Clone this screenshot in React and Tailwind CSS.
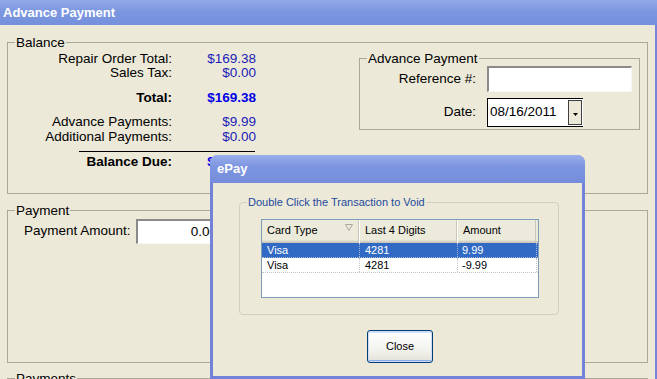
import React from 'react';

const balanceRows = [
  { label: 'Repair Order Total:', value: '$169.38', gap: 'mt-[2px]' },
  { label: 'Sales Tax:', value: '$0.00', gap: '' },
  { label: 'Total:', value: '$169.38', gap: 'mt-[11px]', bold: true },
  { label: 'Advance Payments:', value: '$9.99', gap: 'mt-[10px]' },
  { label: 'Additional Payments:', value: '$0.00', gap: 'mt-[1px]' },
];

const transactions = [
  { card: 'Visa', digits: '4281', amount: '9.99', selected: true },
  { card: 'Visa', digits: '4281', amount: '-9.99' },
];

const sunken =
  'bg-white border-t-2 border-l-2 border-r border-b border-t-[#8a8a8a] border-l-[#8a8a8a] border-r-[#f6f6f6] border-b-[#f6f6f6]';

function BalanceRow({ label, value, bold, gap }) {
  return (
    <div className={`flex h-[14px] leading-[14px] ${gap} ${bold ? 'font-bold' : ''}`}>
      <span className="w-[164px] text-right">{label}</span>
      <span className={`w-[84px] text-right ${bold ? 'text-[#0000e6]' : 'text-[#1c1cb8]'}`}>{value}</span>
    </div>
  );
}

function Legend({ children, className = '' }) {
  return <legend className={`ml-[7px] px-[1px] leading-[15px] ${className}`}>{children}</legend>;
}

function EPayDialog() {
  return (
    <div className="absolute left-[210px] top-[155px] w-[375px] h-[224px] flex flex-col rounded-t-[8px] overflow-hidden bg-[#7282d8] text-[11px]">
      <div className="h-[28px] shrink-0 flex items-center pl-[7px] text-[13px] font-bold text-white bg-[linear-gradient(to_bottom,#9aaeea,#7d96e0_40%,#758cdb)]">
        ePay
      </div>
      <div className="flex-1 mx-[3px] mb-[3px] bg-[#ece9d8]">
        <fieldset className="ml-[26px] mt-[13px] w-[320px] h-[119px] rounded-[4px] border border-[#d0d0bf]">
          <legend className="ml-[7px] px-[1px] leading-[13px] text-[#1d4a9c]">Double Click the Transaction to Void</legend>

          <div className="ml-[21px] mt-[10px] w-[278px] h-[79px] border border-[#7f9db9] bg-white overflow-hidden">
            {/* header */}
            <div className="flex h-[23px] bg-[#ebeadb] shadow-[inset_0_-1px_0_#cbc7b8,inset_0_-2px_0_#d6d2c2,inset_0_-3px_0_#e2e1d9]">
              <div className="w-[97px] flex items-center pl-[5px] pb-[2px] border-r border-[#cbc7b8]">
                <span>Card Type</span>
                <svg className="ml-auto mr-[5px] -mt-[6px]" width="8" height="7" viewBox="0 0 8 7">
                  <path d="M0.5 0.5 H7.5 L4 6.5 Z" fill="none" stroke="#aca899" strokeWidth="1" />
                </svg>
              </div>
              <div className="w-[98px] flex items-center pl-[5px] pb-[2px] border-l border-white border-r border-r-[#cbc7b8]">
                Last 4 Digits
              </div>
              <div className="w-[79px] flex items-center pl-[5px] pb-[2px] border-l border-white border-r border-r-[#cbc7b8]">
                Amount
              </div>
            </div>
            {/* rows */}
            {transactions.map((t, i) => (
              <div
                key={i}
                className={`flex h-[15px] leading-[14px] border-b border-dotted ${
                  t.selected ? 'bg-[#316ac5] text-white border-[#a8b8d8]' : 'border-[#c4c4c4]'
                }`}
              >
                <div className={`w-[98px] pl-[5px] border-r border-dotted ${t.selected ? 'border-[#a8b8d8]' : 'border-[#c4c4c4]'}`}>{t.card}</div>
                <div className={`w-[98px] pl-[5px] border-r border-dotted ${t.selected ? 'border-[#a8b8d8]' : 'border-[#c4c4c4]'}`}>{t.digits}</div>
                <div className={`w-[79px] pl-[4px] border-r border-dotted ${t.selected ? 'border-[#a8b8d8]' : 'border-[#c4c4c4]'}`}>{t.amount}</div>
              </div>
            ))}
          </div>
        </fieldset>

        <button className="ml-[154px] mt-[15px] w-[66px] h-[33px] rounded-[3px] border border-[#003c74] bg-[linear-gradient(to_bottom,#ffffff,#f3f3ee_60%,#e3e0d6)] shadow-[inset_0_0_0_1px_#cddbf5,inset_0_-2px_0_#89adea,inset_0_2px_0_#cee0fb] text-black">
          Close
        </button>
      </div>
    </div>
  );
}

export default function App() {
  return (
    <div className="relative w-[657px] h-[379px] overflow-hidden bg-[#ece9d8] font-['Liberation_Sans',Arial,sans-serif] text-[13.5px] text-black">
      {/* title bar */}
      <div className="h-[25px] flex items-center pl-[3px] text-[13px] font-bold text-white bg-[linear-gradient(to_bottom,#93a9e8,#7c97e0_45%,#7590dc)]">
        Advance Payment
      </div>

      <div className="h-[354px] overflow-hidden border-r-2 border-[#7884d8]">
        {/* Balance */}
        <fieldset className="ml-[7px] mt-[10px] w-[641px] h-[159px] border border-[#aca899]">
          <Legend>Balance</Legend>
          <div className="flex">
            <div className="w-[250px]">
              {balanceRows.map((r) => (
                <BalanceRow key={r.label} {...r} />
              ))}
              <div className="ml-[71px] mt-[7px] w-[176px] h-px bg-black" />
              <BalanceRow label="Balance Due:" value="$159.39" bold gap="mt-[3px]" />
            </div>

            <fieldset className="ml-auto mr-[7px] mt-[1px] w-[281px] h-[79px] border border-[#aca899]">
              <Legend>Advance Payment</Legend>
              <div className="flex items-center h-[26px]">
                <span className="w-[116px] text-right">Reference #:</span>
                <div className={`ml-[11px] w-[145px] h-[26px] ${sunken}`} />
              </div>
              <div className="flex items-center h-[29px] mt-[6px]">
                <span className="w-[116px] text-right">Date:</span>
                <div className="ml-[11px] w-[96px] h-[29px] flex bg-white border-t border-l border-b border-black">
                  <div className="flex-1 flex items-center pl-[2px]">08/16/2011</div>
                  <div className="w-[14px] my-[1px] mr-[1px] flex items-center justify-center border border-[#404040] bg-[#ece9d8]">
                    <svg width="5" height="3" viewBox="0 0 5 3" className="mt-[3px]">
                      <path d="M0 0 H5 L2.5 3 Z" fill="#000" />
                    </svg>
                  </div>
                </div>
              </div>
            </fieldset>
          </div>
        </fieldset>

        {/* Payment */}
        <fieldset className="ml-[7px] mt-[9px] w-[641px] h-[160px] border border-[#aca899]">
          <Legend>Payment</Legend>
          <div className="flex items-center mt-[1px] ml-[16px]">
            <span className="w-[112px]">Payment Amount:</span>
            <div className={`w-[86px] h-[25px] flex items-center justify-end pr-[4px] ${sunken}`}>0.00</div>
          </div>
        </fieldset>

        {/* Payments */}
        <fieldset className="ml-[7px] mt-[8px] w-[641px] h-[100px] border border-[#aca899]">
          <Legend>Payments</Legend>
        </fieldset>
      </div>

      <EPayDialog />
    </div>
  );
}
